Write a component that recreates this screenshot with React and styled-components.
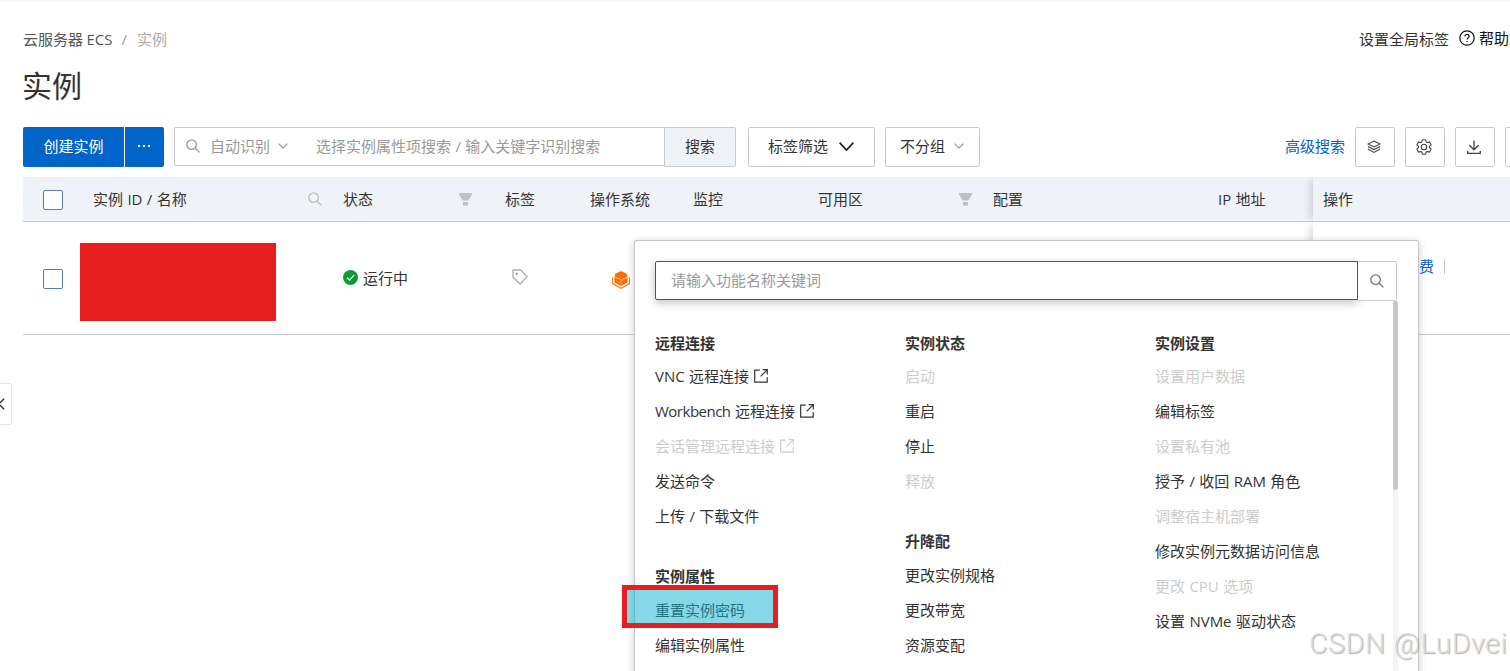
import React from "react";
import styled, { createGlobalStyle, css } from "styled-components";

const menuColumns = [
  [
    {
      title: "远程连接",
      items: [
        { text: "VNC 远程连接", external: true },
        { latin: "Workbench", text: " 远程连接", external: true },
        { text: "会话管理远程连接", external: true, disabled: true },
        { text: "发送命令" },
        { text: "上传 / 下载文件" },
      ],
    },
    {
      title: "实例属性",
      items: [{ text: "重置实例密码", marked: true }, { text: "编辑实例属性" }],
    },
  ],
  [
    {
      title: "实例状态",
      items: [
        { text: "启动", disabled: true },
        { text: "重启" },
        { text: "停止" },
        { text: "释放", disabled: true },
      ],
    },
    {
      title: "升降配",
      items: [{ text: "更改实例规格" }, { text: "更改带宽" }, { text: "资源变配" }],
    },
  ],
  [
    {
      title: "实例设置",
      items: [
        { text: "设置用户数据", disabled: true },
        { text: "编辑标签" },
        { text: "设置私有池", disabled: true },
        { text: "授予 / 收回 RAM 角色" },
        { text: "调整宿主机部署", disabled: true },
        { text: "修改实例元数据访问信息" },
        { text: "更改 CPU 选项", disabled: true },
        { text: "设置 NVMe 驱动状态" },
      ],
    },
  ],
];

const SearchIcon = ({ size = 14, color = "#999" }) => (
  <Svg width={size} height={size} viewBox="0 0 14 14" stroke={color} strokeWidth="1.3">
    <circle cx="5.6" cy="5.6" r="4.8" />
    <path d="M9.2 9.2L13.4 13.4" />
  </Svg>
);

const Chevron = ({ w = 10, h = 6, color = "#999", weight = 1.2 }) => (
  <Svg width={w} height={h} viewBox={`0 0 ${w} ${h}`} stroke={color} strokeWidth={weight}>
    <path d={`M0.6 0.6L${w / 2} ${h - 0.9}L${w - 0.6} 0.6`} />
  </Svg>
);

const FilterIcon = () => (
  <Svg width="13" height="13" viewBox="0 0 13 13" stroke="none">
    <path d="M0 0H13V1.4L9.4 7.4H3.6L0 1.4Z" fill="#c0c0c0" />
    <path d="M4 9H9V12.6H4Z" fill="#c0c0c0" />
  </Svg>
);

const HelpIcon = () => (
  <Svg width="16" height="16" viewBox="0 0 16 16" stroke="#111" strokeWidth="1.2">
    <circle cx="8" cy="8" r="7.2" />
    <path d="M5.9 6.5C5.9 3.7 10.1 3.8 10.1 6.4C10.1 7.9 8 8 8 9.6" />
    <path d="M8 10.9V12.1" />
  </Svg>
);

const LayersIcon = () => (
  <Svg width="14" height="14" viewBox="0 0 14 14" stroke="#444" strokeWidth="1.1">
    <path d="M7 1L13 4L7 7L1 4Z" />
    <path d="M1 6.4L7 9.6L13 6.4" />
    <path d="M1 9.1L7 12.4L13 9.1" />
  </Svg>
);

const GearIcon = () => (
  <Svg width="16" height="16" viewBox="0 0 16 16" stroke="#444" strokeWidth="1.1">
    <path
      d="M6.4 0.8H9.6L10.2 2.9L11.3 3.5L13.4 2.9L15.1 5.8L13.5 7.4V8.6L15.1 10.2L13.4 13.1L11.3 12.5L10.2 13.1L9.6 15.2H6.4L5.8 13.1L4.7 12.5L2.6 13.1L0.9 10.2L2.5 8.6V7.4L0.9 5.8L2.6 2.9L4.7 3.5L5.8 2.9Z"
      strokeLinejoin="round"
    />
    <circle cx="8" cy="8" r="2.7" />
  </Svg>
);

const DownloadIcon = () => (
  <Svg width="14" height="14" viewBox="0 0 14 14" stroke="#444" strokeWidth="1.3">
    <path d="M7 0.5V9.6M2.4 5.2L7 9.8L11.6 5.2" />
    <path d="M0.7 11V13.3H13.3V11" />
  </Svg>
);

const ExternalIcon = () => (
  <Svg width="14" height="14" viewBox="0 0 14 14" stroke="currentColor" strokeWidth="1.2">
    <path d="M5.8 1.2H0.7V13.2H13.2V8.2" />
    <path d="M8.6 0.7H13.3V5.4M13.1 0.9L6.6 7.4" />
  </Svg>
);

const CheckIcon = () => (
  <Svg width="15" height="15" viewBox="0 0 15 15" stroke="#fff" strokeWidth="1.2">
    <circle cx="7.5" cy="7.5" r="7.5" fill="#0a9a36" stroke="none" />
    <path d="M4.1 7.7L6.6 10.1L11 5.2" />
  </Svg>
);

const TagIcon = () => (
  <Svg width="16" height="16" viewBox="0 0 16 16" stroke="#aaa" strokeWidth="1.3">
    <path d="M1 1H8.6L15 7.4L8.2 15L1 8.2Z" strokeLinejoin="round" />
    <circle cx="4.7" cy="4.8" r="0.7" />
  </Svg>
);

const SystemIcon = () => (
  <Svg width="18" height="18" viewBox="0 0 18 18" stroke="none">
    <path d="M9 0L14.6 2.8L15.6 6V11.4L9 15L2.4 11.4V6L3.4 2.8Z" fill="#ff6a00" />
    <path d="M0.6 6.6V12.6L9 17.2L17.4 12.6V6.6" stroke="#ff7a1a" strokeWidth="1.2" fill="none" />
    <path d="M3 6L9 8.8L15 6" stroke="#ffd0a8" strokeWidth="0.8" fill="none" />
    <path d="M4 10L8 12M10 9.4L14.6 7.4M9 9V13" stroke="#ffb27a" strokeWidth="0.8" fill="none" />
  </Svg>
);

const App = () => (
  <Page>
    <GlobalStyle />
    <TopShade />
    <Header>
      <Breadcrumb>
        <span>云服务器 ECS</span>
        <Slash>/</Slash>
        <Current>实例</Current>
      </Breadcrumb>
      <HeaderLinks>
        <span>设置全局标签</span>
        <HelpLink>
          <HelpIcon />
          帮助文档
        </HelpLink>
      </HeaderLinks>
    </Header>
    <Title>实例</Title>

    <Toolbar>
      <PrimaryButton $width={101}>创建实例</PrimaryButton>
      <PrimaryButton $width={39} $last>
        <Dots>
          <i />
          <i />
          <i />
        </Dots>
      </PrimaryButton>
      <SearchBox>
        <SearchIcon />
        <SearchType>自动识别</SearchType>
        <Chevron />
        <SearchHint>选择实例属性项搜索 / 输入关键字识别搜索</SearchHint>
      </SearchBox>
      <SearchButton>搜索</SearchButton>
      <Select $width={127} $gap={11} $inset={19}>
        标签筛选
        <Chevron w={15} h={9} color="#222" weight={1.7} />
      </Select>
      <Select $width={95} $gap={9} $inset={14}>
        不分组
        <Chevron />
      </Select>
      <ToolbarRight>
        <AdvancedLink>高级搜索</AdvancedLink>
        <IconButton><LayersIcon /></IconButton>
        <IconButton><GearIcon /></IconButton>
        <IconButton><DownloadIcon /></IconButton>
        <IconButton />
      </ToolbarRight>
    </Toolbar>

    <HeadRow>
      <CheckCell><Checkbox /></CheckCell>
      <HeadCell>实例 ID / 名称<SearchIcon color="#bbb" /></HeadCell>
      <HeadCell $end={23}>状态<FilterIcon /></HeadCell>
      <HeadCell>标签</HeadCell>
      <HeadCell>操作系统</HeadCell>
      <HeadCell>监控</HeadCell>
      <HeadCell>可用区<FilterIcon /></HeadCell>
      <HeadCell>配置</HeadCell>
      <HeadCell>IP 地址</HeadCell>
      <FixedHeadCell>操作</FixedHeadCell>
    </HeadRow>
    <BodyRow>
      <CheckCell><Checkbox /></CheckCell>
      <RedactedCell><Redacted /></RedactedCell>
      <StatusCell><CheckIcon />运行中</StatusCell>
      <TagCell><TagIcon /></TagCell>
      <SystemCell><SystemIcon /></SystemCell>
      <div />
      <div />
      <div />
      <div />
      <ActionCell>
        <ActionLink>续费</ActionLink>
        <Divider />
      </ActionCell>
    </BodyRow>

    <CollapseHandle>
      <Svg width="6" height="12" viewBox="0 0 6 12" stroke="#333" strokeWidth="1.4">
        <path d="M5.2 0.8L-0.2 6L5.2 11.2" />
      </Svg>
    </CollapseHandle>

    <Menu>
      <MenuSearch>
        <MenuInput placeholder="请输入功能名称关键词" />
        <MenuSearchButton><SearchIcon color="#777" /></MenuSearchButton>
      </MenuSearch>
      <MenuBody>
        <MenuColumns>
          {menuColumns.map((groups) => (
            <div key={groups[0].title}>
              {groups.map((group) => (
                <MenuGroup key={group.title}>
                  <MenuTitle>{group.title}</MenuTitle>
                  {group.items.map((item) => (
                    <MenuItem key={item.text} $disabled={item.disabled}>
                      <span>
                        {item.latin && <Latin>{item.latin}</Latin>}
                        {item.text}
                      </span>
                      {item.external && <ExternalIcon />}
                      {item.marked && <Marker />}
                    </MenuItem>
                  ))}
                </MenuGroup>
              ))}
            </div>
          ))}
        </MenuColumns>
        <ScrollTrack>
          <ScrollThumb />
        </ScrollTrack>
      </MenuBody>
    </Menu>
    <Watermark>CSDN @LuDvei</Watermark>
  </Page>
);

export default App;

const GlobalStyle = createGlobalStyle`
  * {
    box-sizing: border-box;
  }
  body {
    margin: 0;
    overflow: hidden;
    background: #fff;
  }
`;

const Svg = styled.svg`
  display: block;
  flex: none;
  fill: none;
`;

const Page = styled.div`
  position: relative;
  width: 1510px;
  height: 671px;
  overflow: hidden;
  padding-left: 23px;
  font-family: "Open Sans", "Noto Sans CJK SC", sans-serif;
  font-size: 15px;
  line-height: 20px;
  word-spacing: 0.5px;
  color: #333;
  white-space: nowrap;
`;

const TopShade = styled.div`
  height: 3px;
  margin-left: -23px;
  background: linear-gradient(#f3f3f3, #fff);
`;

const Header = styled.div`
  display: flex;
  justify-content: space-between;
  padding-top: 26px;
  height: 62px;
`;

const Breadcrumb = styled.div`
  display: flex;
  color: #555;
  word-spacing: -0.5px;
`;
const Slash = styled.span`
  margin: 0 10px 0 9px;
  color: #999;
`;
const Current = styled.span`
  color: #aaa;
`;

const HeaderLinks = styled.div`
  display: flex;
  width: 151px;
  gap: 10px;
`;
const HelpLink = styled.div`
  display: flex;
  gap: 4px;
  color: #111;
  margin-top: -1px;
  svg {
    margin-top: 2px;
  }
`;

const Title = styled.h1`
  margin: 0 0 0 -1px;
  height: 62px;
  font-size: 30px;
  font-weight: 400;
  line-height: 42px;
`;

const Toolbar = styled.div`
  display: flex;
  height: 50px;
  align-items: flex-start;
`;

const PrimaryButton = styled.button`
  display: flex;
  align-items: center;
  justify-content: center;
  width: ${(p) => p.$width}px;
  height: 40px;
  padding: 0 ${(p) => (p.$last ? 2 : 0)}px 2px 0;
  border: 0;
  border-radius: ${(p) => (p.$last ? "0 2px 2px 0" : "2px 0 0 2px")};
  margin-right: ${(p) => (p.$last ? 10 : 1)}px;
  background: #0064c8;
  color: #fff;
  font: inherit;
`;
const Dots = styled.span`
  display: flex;
  gap: 3px;
  i {
    width: 2px;
    height: 2px;
    background: #fff;
  }
`;

const SearchBox = styled.div`
  display: flex;
  align-items: center;
  width: 490px;
  height: 39px;
  padding: 0 0 1px 11px;
  border: 1px solid #c8cacd;
  border-right: 0;
  border-radius: 2px 0 0 2px;
  color: #999;
`;
const SearchType = styled.span`
  margin: 0 8px 0 10px;
`;
const SearchHint = styled.span`
  margin-left: 28px;
`;
const SearchButton = styled.button`
  width: 72px;
  height: 40px;
  margin-right: 12px;
  padding: 0 0 2px;
  border: 1px solid #c8cacd;
  border-radius: 0 2px 2px 0;
  background: #eff3f8;
  color: #333;
  font: inherit;
`;

const Select = styled.div`
  display: flex;
  align-items: center;
  gap: ${(p) => p.$gap}px;
  width: ${(p) => p.$width}px;
  height: 40px;
  margin-right: 10px;
  padding: 0 0 2px ${(p) => p.$inset}px;
  border: 1px solid #c8cacd;
  border-radius: 2px;
`;

const ToolbarRight = styled.div`
  display: flex;
  align-items: center;
  gap: 10px;
  width: 225px;
  margin-left: auto;
`;
const AdvancedLink = styled.a`
  width: 60px;
  padding-bottom: 2px;
  color: #0064c8;
`;
const IconButton = styled.button`
  display: flex;
  flex: none;
  align-items: center;
  justify-content: center;
  width: 40px;
  height: 40px;
  padding: 0 2px 1px 0;
  border: 1px solid #c8cacd;
  border-radius: 2px;
  background: #fff;
`;

const row = css`
  display: grid;
  grid-template-columns: 60px 250px 162px 85px 103px 125px 175px 225px 105px 1fr;
`;
const HeadRow = styled.div`
  ${row}
  height: 45px;
  border-bottom: 1px solid #c8cacd;
  border-radius: 2px 0 0 0;
  background: #eff3f8;
`;
const BodyRow = styled.div`
  ${row}
  height: 113px;
  border-bottom: 1px solid #c8cacd;
`;
const CheckCell = styled.div`
  display: flex;
  align-items: center;
  padding: 2px 0 0 20px;
`;
const Checkbox = styled.span`
  width: 20px;
  height: 20px;
  border: 1px solid #5580ad;
  border-radius: 2px;
  background: #fff;
`;
const HeadCell = styled.div`
  display: flex;
  align-items: center;
  justify-content: space-between;
  padding: 0 ${(p) => p.$end || 11}px 0 10px;
`;
const fixedShade = css`
  box-shadow: -6px 0 8px -3px rgba(0, 0, 0, 0.15);
  clip-path: inset(0 0 0 -14px);
`;
const FixedHeadCell = styled(HeadCell)`
  ${fixedShade}
`;
const RedactedCell = styled.div`
  margin-left: -3px;
`;
const Redacted = styled.div`
  width: 196px;
  height: 78px;
  margin-top: 21px;
  background: #e61e1e;
`;
const StatusCell = styled.div`
  display: flex;
  align-items: center;
  gap: 5px;
  padding: 0 0 1px 10px;
`;
const TagCell = styled.div`
  padding: 47px 0 0 17px;
`;
const SystemCell = styled.div`
  padding: 49px 0 0 32px;
`;
const ActionCell = styled.div`
  ${fixedShade}
  display: flex;
  padding: 34px 0 0 91px;
`;
const ActionLink = styled.a`
  color: #0064c8;
`;
const Divider = styled.span`
  width: 1px;
  height: 15px;
  margin: 3px 0 0 10px;
  background: #c8cacd;
`;

const CollapseHandle = styled.div`
  position: absolute;
  left: -2px;
  top: 383px;
  display: flex;
  align-items: center;
  width: 14px;
  height: 42px;
  border: 1px solid #e3e4e6;
  border-radius: 2px;
`;

const Menu = styled.div`
  position: absolute;
  left: 634px;
  top: 240px;
  width: 785px;
  height: 460px;
  padding: 20px;
  border: 1px solid #c4c6c9;
  border-radius: 2px;
  background: #fff;
  box-shadow: 0 2px 8px rgba(0, 0, 0, 0.2);
`;
const MenuSearch = styled.div`
  display: flex;
  align-items: flex-start;
`;
const MenuInput = styled.input`
  width: 703px;
  height: 39px;
  padding: 0 15px 2px;
  border: 1px solid #0064c8;
  border-radius: 2px 0 0 2px;
  outline: 0;
  box-shadow: 0 3px 8px rgba(0, 0, 0, 0.24);
  font: inherit;
  &::placeholder {
    color: #999;
  }
`;
const MenuSearchButton = styled.button`
  display: flex;
  align-items: center;
  justify-content: center;
  width: 39px;
  height: 40px;
  padding: 0 1px 1px 0;
  border: 1px solid #c8cacd;
  border-left: 0;
  border-radius: 0 2px 2px 0;
  background: #fff;
`;
const MenuBody = styled.div`
  display: flex;
  justify-content: space-between;
  width: 743px;
`;
const MenuColumns = styled.div`
  display: grid;
  grid-template-columns: 250px 250px 230px;
  padding-top: 25px;
`;
const MenuTitle = styled.div`
  height: 33px;
  font-weight: 700;
  line-height: 34px;
`;
const MenuGroup = styled.div`
  margin-bottom: 25px;
  &:first-child {
    margin-bottom: 26px;
  }
  &:first-child ${MenuTitle} {
    height: 32px;
  }
`;
const MenuItem = styled.div`
  position: relative;
  display: flex;
  align-items: center;
  gap: 5px;
  height: 35px;
  color: ${(p) => (p.$disabled ? "#ccc" : "#333")};
`;
const Latin = styled.span`
  letter-spacing: -0.5px;
`;
const Marker = styled.span`
  position: absolute;
  left: -33px;
  top: -7px;
  width: 156px;
  height: 43px;
  border: 5px solid #e61e1e;
  background: rgba(13, 175, 209, 0.5);
`;
const ScrollTrack = styled.div`
  width: 5px;
  height: 400px;
  border-radius: 3px;
  background: #f4f4f4;
`;
const ScrollThumb = styled.div`
  width: 5px;
  height: 189px;
  border-radius: 3px;
  background: #c8c8c8;
`;

const Watermark = styled.div`
  position: absolute;
  left: 1309px;
  top: 627px;
  font-family: Roboto, "Liberation Sans", sans-serif;
  font-size: 28.5px;
  font-weight: 300;
  line-height: 34px;
  letter-spacing: 0.6px;
  color: rgba(222, 222, 222, 0.9);
  text-shadow: 1px 1px 1px rgba(130, 130, 130, 0.65);
`;
